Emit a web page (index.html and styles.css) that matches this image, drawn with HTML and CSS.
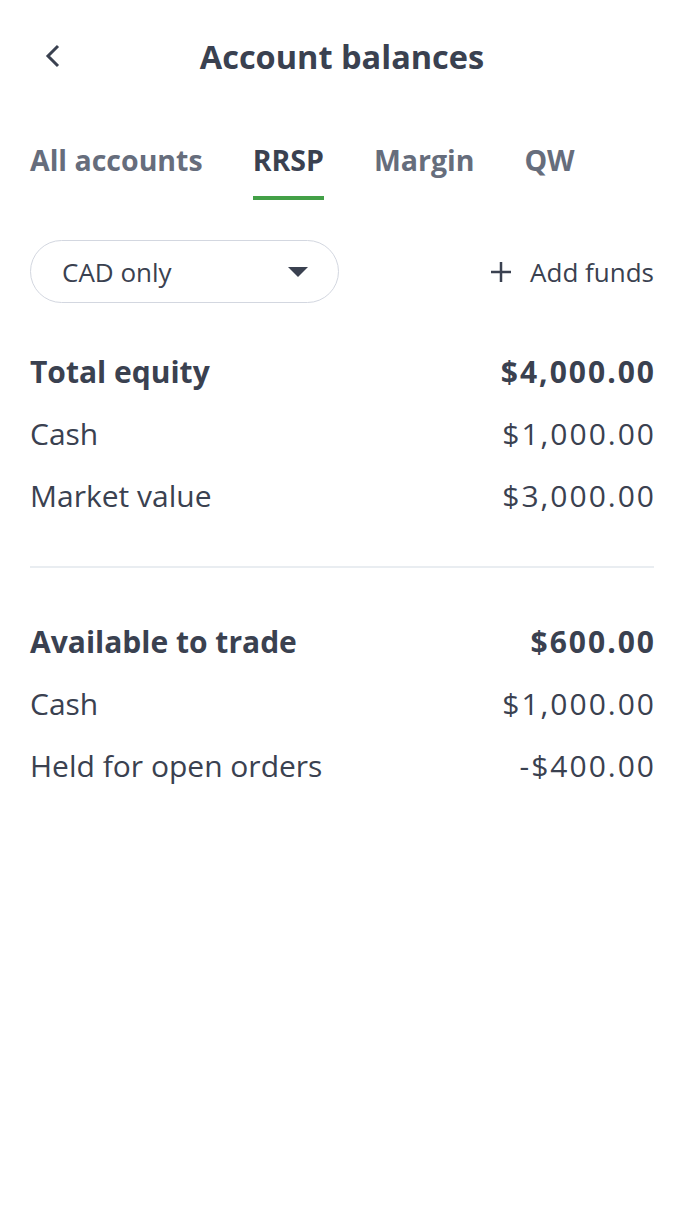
FILE: index.html
```html
<!DOCTYPE html>
<html lang="en">
<head>
    <meta charset="UTF-8">
    <meta name="viewport" content="width=device-width, initial-scale=1.0">
    <title>Account balances</title>
    <link rel="stylesheet" href="styles.css">
</head>
<body>
    <header class="topbar">
        <button class="back-btn" aria-label="Back">
            <svg width="18" height="26" viewBox="0 0 18 26"><path d="M14 3 L4 13 L14 23" fill="none" stroke="#3a4150" stroke-width="3"/></svg>
        </button>
        <h1>Account balances</h1>
    </header>

    <nav class="tabs">
        <a class="tab">All accounts</a>
        <a class="tab active">RRSP</a>
        <a class="tab">Margin</a>
        <a class="tab">QW</a>
    </nav>

    <div class="toolbar">
        <div class="currency-select">
            <span>CAD only</span>
            <svg width="22" height="12" viewBox="0 0 22 12"><path d="M1 1 H21 L11 11 Z" fill="#3a4150"/></svg>
        </div>
        <a class="add-funds">
            <svg width="22" height="22" viewBox="0 0 22 22"><path d="M11 1 V21 M1 11 H21" stroke="#3a4150" stroke-width="2.5"/></svg>
            <span>Add funds</span>
        </a>
    </div>

    <section class="balances">
        <div class="row total"><span>Total equity</span><span class="amount">$4,000.00</span></div>
        <div class="row"><span>Cash</span><span class="amount">$1,000.00</span></div>
        <div class="row"><span>Market value</span><span class="amount">$3,000.00</span></div>
    </section>

    <hr class="divider">

    <section class="balances second">
        <div class="row total"><span>Available to trade</span><span class="amount">$600.00</span></div>
        <div class="row"><span>Cash</span><span class="amount">$1,000.00</span></div>
        <div class="row"><span>Held for open orders</span><span class="amount">-$400.00</span></div>
    </section>
</body>
</html>
```

FILE: styles.css
```css
body {
    font-family: "Open Sans", "Noto Sans", sans-serif;
    margin: 0;
    padding: 0 30px;
    background-color: #ffffff;
    color: #3a4150;
}

.topbar {
    position: relative;
    height: 116px;
    display: flex;
    align-items: flex-start;
    justify-content: center;
}

.back-btn {
    position: absolute;
    left: 14px;
    top: 43px;
    background: none;
    border: none;
    padding: 0;
    cursor: pointer;
}

h1 {
    margin: 0;
    padding-top: 34px;
    font-size: 32.5px;
    font-weight: 700;
    line-height: 46px;
}

.tabs {
    display: flex;
    gap: 50px;
    height: 84px;
}

.tab {
    font-size: 28.5px;
    font-weight: 700;
    color: #666d7c;
    line-height: 44px;
    padding-top: 22px;
    height: 80px;
    box-sizing: border-box;
    cursor: pointer;
}

.tab.active {
    color: #3a4150;
    border-bottom: 4px solid #43a047;
    height: 84px;
}

.toolbar {
    display: flex;
    justify-content: space-between;
    align-items: center;
    margin-top: 40px;
}

.currency-select {
    width: 309px;
    height: 63px;
    box-sizing: border-box;
    border: 1.5px solid #d3d7e0;
    border-radius: 32px;
    display: flex;
    align-items: center;
    justify-content: space-between;
    padding: 0 29px 0 31px;
    font-size: 26px;
}

.add-funds {
    display: flex;
    align-items: center;
    gap: 18px;
    font-size: 26px;
    cursor: pointer;
}

.balances {
    padding-top: 38px;
}

.balances.second {
    padding-top: 43px;
}

.row {
    display: flex;
    justify-content: space-between;
    font-size: 30px;
    line-height: 62px;
}

.row.total {
    font-weight: 700;
}

.amount {
    letter-spacing: 2px;
    margin-right: -2px;
}

.divider {
    border: none;
    border-top: 2px solid #e9edf1;
    margin: 39px 0 0;
}
```
